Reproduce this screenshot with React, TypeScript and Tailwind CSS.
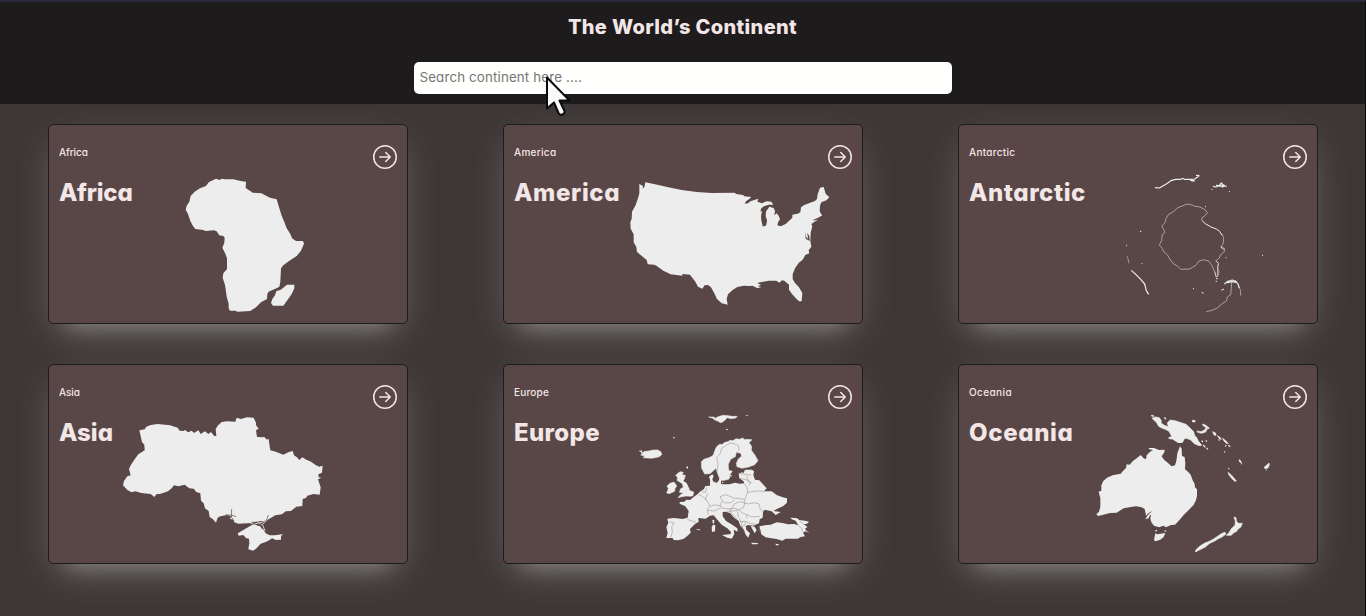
import type { ReactNode } from "react";
import { BsArrowRightCircle } from "react-icons/bs";

type Continent = { name: string; tracking: string; small: string; x: number; y: number; map: ReactNode };

const Africa = () => (
  <>
    <path d="M108 63L117 51L138 41L149 45L155 41L165 43L190 43L212 48L228 50L227 69L242 79L248 83L274 85L300 98L320 103L326 123L335 152L343 171L350 190L361 207L366 220L378 228L399 228L402 236L393 257L380 273L356 289L340 301L333 310L331 350L328 365L321 369L296 380L292 387L291 402L273 412L258 427L241 438L202 440L196 437L180 437L176 430L176 416L170 395L167 372L165 360L158 338L160 325L171 312L171 280L165 264L157 248L163 233L164 218L160 213L148 211L140 199L132 196L106 198L100 195L76 192L69 183L61 168L54 147L47 134L50 122L58 110L62 93L74 80L90 70Z" />
    <path d="M351 359L373 359L373 370L365 387L352 406L340 422L309 422L303 414L307 402L315 391L319 378L331 375Z" />
  </>
);

const America = () => (
  <path
    fillRule="evenodd"
    d="M73 57L84 63L83 71L88 66L91 52L120 58L160 67L200 75L245 81L290 84L358 83L364 87L384 90L388 94L409 96L402 103L393 109L389 116L399 115L406 109L430 101L427 110L441 115L455 109L469 110L475 119L461 119L447 124L439 130L436 139L441 139L438 153L439 166L443 184L450 184L454 179L456 166L452 154L453 139L458 133L461 128L463 125L476 129L480 138L478 151L485 145L491 152L495 163L490 170L487 181L497 184L512 177L532 158L532 149L548 146L556 142L558 127L568 120L584 114L600 108L606 102L608 88L615 68L626 66L632 86L643 97L634 106L619 112L615 122L614 138L618 146L622 151L608 159L592 166L602 166L609 164L594 173L589 178L592 184L587 204L586 228L589 245L581 256L583 265L571 270L563 284L551 294L540 310L533 328L533 342L540 354L552 367L562 384L560 409L552 409L542 399L531 387L522 374L522 359L508 347L501 346L493 353L484 347L462 347L440 351L426 354L438 359L428 364L439 366L428 370L412 362L404 363L387 362L367 366L352 376L339 388L335 402L338 419L320 415L306 402L299 387L288 367L279 360L269 361L262 371L249 365L241 350L225 329L202 327L202 332L167 328L145 317L124 302L118 299L98 298L95 285L84 276L66 261L64 246L56 232L56 208L47 191L46 172L50 162L51 140L62 120L69 100L73 85ZM570 197L573 215L579 222L577 203L583 214L584 228L572 221Z"
  />
);

const Antarctic = () => (
  <g fill="none" stroke="#ededed" strokeWidth="2.3" strokeLinejoin="bevel">
    <path d="M135 68L148 69L170 56L185 46L197 43L213 43L217 40L223 43L243 43L254 42L262 37L268 32L258 31" strokeWidth="3.4" />
    <path d="M241 44l6 3 7 0" strokeWidth="5" />
    <path d="M309 64l9 2 8-3 18 0 6 1M318 61l10 1 6-8 4 5 6 3-8 5" strokeWidth="3.8" />
    <path opacity=".7" d="M276 165L275 159L285 152L292 143L285 134L270 126L254 124L246 120L231 117L219 122L204 128L190 140L175 149L168 161L165 173L155 183L160 191L165 202L157 208L155 227L148 240L157 250L161 260L172 269L180 283L190 296L202 303L212 313L239 312L256 302L266 289L281 284L297 289L306 302L313 318L319 337M336 207L341 218L340 234L333 248L343 249L343 260L332 269L328 279L317 288L326 295L323 306L327 321L325 331L318 336L315 320" />
    <path d="M275 166L286 176L303 186L319 192L329 199L336 211" strokeWidth="3" />
    <path d="M318 287L325 295L323 309L322 335M333 242L336 250L342 253" opacity=".8" />
    <path d="M64 316L78 329L92 343L104 357L109 377L116 388" strokeWidth="3.6" />
    <path d="M51 274l3 7 3 14" opacity=".65" />
    <path d="M289 440L306 436L320 430L337 416L349 408L352 396L362 389L364 370L365 351" opacity=".7" />
    <path d="M343 357L354 349L367 345L378 349L385 359L388 369M352 353L366 350L378 352" strokeWidth="3.4" />
    <path d="M384 362L391 374L392 392" opacity=".65" />
    <path d="M334 376l8-4M275 382l6 3M90 199h4M48 241h3M304 73h3M357 80h3M456 271h3M249 371h3M94 296h3M285 125h3M317 349h4M347 278h3M318 341h5" strokeWidth="3" />
  </g>
);

const Asia = () => (
  <>
    <path d="M88 76L104 73L109 65L122 60L143 57L180 61L203 68L209 77L220 78L225 75L234 82L245 77L252 84L265 76L272 87L285 79L295 87L303 81L312 92L319 94L317 72L323 62L335 51L350 49L376 50L380 38L393 42L410 37L431 38L438 53L438 61L446 71L438 76L441 96L455 97L463 96L471 104L476 101L478 118L481 136L492 139L501 142L520 149L535 142L548 138L552 151L561 157L568 165L577 157L589 164L603 170L618 181L628 185L638 182L636 203L625 208L626 217L634 218L624 223L632 247L629 269L611 267L592 272L588 279L578 282L577 303L559 305L543 318L527 319L516 328L496 331L486 337L473 344L467 350L452 348L440 350L424 354L413 355L385 356L373 352L370 344L359 341L365 335L352 330L331 334L323 338L318 353L309 343L299 336L296 318L285 310L281 295L273 287L271 265L259 261L251 251L238 250L224 239L205 244L192 241L185 250L174 259L150 267L140 267L133 276L122 267L94 264L76 259L65 262L52 255L39 241L42 228L52 214L62 211L57 192L63 179L75 161L85 148L97 140L104 136L103 119L96 111Z" />
    <path d="M424 361L434 359L450 364L461 375L467 385L479 391L493 391L506 389L519 387L513 393L513 404L498 405L486 400L480 404L469 410L452 416L438 431L429 437L415 433L416 426L418 415L417 401L408 399L400 390L386 392L383 385L399 376L409 370Z" />
    <path d="M440 355L456 352L470 346L475 328M442 350L455 360L466 350M420 353L430 358L445 355M458 360L465 378" fill="none" stroke="#ededed" strokeWidth="2.5" />
    <path d="M346 329L366 331L378 335M365 312L364 336L372 348M424 352L440 352L452 360L456 372M458 353L470 345L475 330" fill="none" stroke="#594646" strokeWidth="2" />
  </>
);

const Europe = () => (
  <>
    <g stroke="#ededed" strokeWidth="1.6" strokeLinejoin="miter">
      <path d="M236 36L252 36L256 40L264 35L279 31L296 32L305 34L322 34L317 39L302 41L292 38L286 44L278 51L271 53L263 48L256 46L247 39ZM28 138L36 137L34 145L45 139L56 138L70 135L84 135L92 140L96 148L88 155L75 158L65 160L51 159L39 158L44 153L32 150L39 144ZM143 205L151 200L160 202L156 209L166 211L163 222L159 228L169 234L177 250L178 256L191 261L189 272L181 274L168 273L152 276L144 278L153 268L161 264L148 262L152 251L160 247L157 236L148 230L141 226L143 217L137 212ZM120 235L132 231L138 239L140 243L135 251L134 259L118 266L110 264L115 251L111 243Z" />
      <path d="M215 190L214 170L222 163L240 157L250 150L257 130L262 123L270 117L275 119L285 112L294 110L300 106L309 107L318 101L328 103L338 99L345 104L352 103L366 104L357 113L365 124L364 136L374 149L384 167L374 179L356 186L336 190L321 185L319 175L325 162L335 153L332 145L319 142L316 155L302 163L295 178L296 196L307 199L299 210L296 223L282 226L271 226L261 200L258 190L240 206L224 207Z" />
    </g>
    <path fillRule="evenodd" d="M247 208L251 213L247 223L251 232L261 233L266 227L269 219L274 224L272 237L282 238L298 238L315 233L330 236L343 235L340 228L328 220L326 205L340 205L345 194L366 194L372 199L370 211L375 224L388 226L399 238L410 250L402 259L425 259L440 270L458 277L471 280L471 293L460 303L442 311L430 318L452 321L437 330L425 319L411 316L404 314L399 321L398 338L389 343L387 355L370 362L355 360L347 363L349 374L360 385L355 398L346 388L342 374L331 362L326 348L311 337L300 324L286 320L278 321L278 334L288 348L303 357L322 370L323 380L311 374L313 387L306 400L301 391L303 381L292 370L275 359L262 344L251 331L240 332L227 341L205 339L206 350L195 357L180 372L182 383L171 394L160 402L144 406L131 405L128 399L109 399L113 383L109 366L115 354L112 341L132 339L158 342L173 338L176 318L166 304L149 296L149 291L163 290L169 284L180 285L190 277L202 268L212 259L222 252L226 243L240 242L240 224L237 215ZM362 362L368 374L374 385L380 376L374 365Z" />
    <path d="M388 364L405 361L422 359L440 352L458 354L474 358L493 357L505 361L497 347L485 343L481 338L500 339L508 345L525 347L537 350L531 356L522 358L532 366L525 371L530 378L539 384L526 379L519 383L525 394L512 396L503 401L484 401L467 401L457 407L440 402L424 400L407 397L394 388L391 374ZM276 390L297 388L310 387L305 401L292 398ZM249 359L256 361L255 379L246 381L245 366ZM247 344L253 345L252 357L248 354ZM364 413L385 414L381 418L366 418ZM435 416L448 418L441 422ZM328 208L336 201L340 206L330 217ZM262 233L273 230L271 242L261 241ZM168 186L173 184L175 189L171 191ZM196 374L211 372L208 376ZM129 97h5v3h-5zM288 72h5v3h-5zM344 33L355 30L353 33Z" />
    <g fill="none" stroke="#8f8282" strokeWidth="1.5">
      <path d="M261 200L264 178L260 158L270 147L275 130L290 120L302 114L312 116L325 121L327 139M328 205L348 209L364 210M327 220L349 224L362 234M350 212L356 229L364 233L355 241M353 262L379 258L403 259M344 237L351 248L353 262L346 279L342 293M205 269L214 272L224 280L232 289M215 260L227 262L230 247M232 289L226 282L233 265M270 275L286 269L300 274L313 280L329 281L343 283M270 275L279 290L286 294L303 293L312 285M232 289L240 303L232 313L234 330M240 304L252 300L271 302L275 290M270 301L277 310L305 312L313 296L331 290L345 294M273 308L253 318L233 316M300 312L314 310L327 314L340 308L345 294M342 293L355 297L375 293L387 297L391 313L399 320M327 314L335 323L348 328L352 340M350 328L364 336L390 334M300 312L303 324L322 342M289 318L305 319L322 316L326 338M329 339L331 350L347 349L362 356L375 357M336 348L335 362L341 378M347 349L344 361L334 365M172 343L186 348L198 351M120 350L132 354L125 366L127 381L122 398M387 364L390 382M505 361L515 371L519 383M509 347L524 360" />
    </g>
    <path d="M209 261h3M248 238L254 230M276 232h4M300 211l6 2M298 220l2-8" stroke="#ededed" strokeWidth="3" />
  </>
);

const Oceania = () => (
  <>
    <path d="M34 328L42 320L46 305L46 279L41 260L49 257L49 241L55 228L66 218L83 211L107 206L114 198L123 189L125 178L134 179L143 169L157 158L167 150L176 160L183 163L185 151L195 140L204 136L192 132L191 129L207 129L222 135L238 134L239 140L230 154L238 165L249 174L260 184L270 181L274 168L277 145L285 124L290 131L291 153L299 156L301 175L300 193L309 200L317 209L323 226L329 237L330 247L336 253L336 272L333 286L325 301L309 317L296 330L284 344L270 359L258 360L243 367L235 362L222 367L207 362L199 352L196 341L198 331L195 330L191 340L181 343L188 331L194 324L183 332L179 312L170 307L153 304L133 307L116 310L95 323L75 324L52 330L39 333ZM211 385L217 388L241 384L236 396L226 404L211 409L207 405Z" />
    <path stroke="#ededed" strokeWidth="2" d="M201 40L211 36L223 38L229 47L228 54L238 61L250 65L247 53L256 45L270 47L285 52L303 58L313 67L326 80L329 92L334 96L340 108L350 121L342 122L328 116L316 104L304 100L297 102L293 112L275 110L262 102L259 92L252 79L241 73L232 70L221 64L214 52ZM198 32L205 31L206 35ZM238 38L243 39L241 43ZM250 99L258 95L263 98L259 103ZM336 78L348 80L359 75L362 69L366 71L362 81L350 85L338 82ZM353 57L361 60L373 69L369 73L362 67L354 62ZM322 46L330 46L330 51L323 51ZM383 80L392 84L393 91L387 90ZM397 92L405 97L409 103L404 102ZM413 100L423 108L430 116L424 115L416 107ZM429 202L438 209L445 217L454 228L449 229L441 221L432 210ZM462 164L466 166L470 175L464 171ZM538 186L548 178L552 174L553 180L549 189L540 191ZM447 336L453 338L454 348L460 355L472 355L467 367L459 372L455 379L447 383L438 391L424 391L433 382L439 371L450 361L451 349ZM332 435L344 424L358 415L373 409L386 402L400 392L411 385L420 382L423 387L411 396L400 401L389 408L374 415L361 426L345 434L334 439Z" />
    <path d="M350 107l4 4M362 106l4 4M355 120l6 7M365 129l4 4M342 115l6 5M400 104l4 2M418 139l2 3M430 121l6 4M430 190l3 2M468 176l2 1M421 124l3-4M331 439h5M277 112h13M211 377h5M238 378h6M542 195h3" stroke="#ededed" strokeWidth="3.5" />
    <path d="M185 330L199 320" fill="none" stroke="#594646" strokeWidth="2.5" />
  </>
);

const continents: Continent[] = [
  { name: "Africa", tracking: "tracking-[-0.15px]", small: "tracking-[-0.1px]", x: 121, y: 40, map: <Africa /> },
  { name: "America", tracking: "tracking-[0.65px]", small: "tracking-[0.3px]", x: 111, y: 40, map: <America /> },
  { name: "Antarctic", tracking: "tracking-[0.55px]", small: "tracking-[0.3px]", x: 151, y: 40, map: <Antarctic /> },
  { name: "Asia", tracking: "tracking-[0px]", small: "tracking-[-0.1px]", x: 61, y: 40, map: <Asia /> },
  { name: "Europe", tracking: "tracking-[0.35px]", small: "tracking-[0.2px]", x: 126, y: 40, map: <Europe /> },
  { name: "Oceania", tracking: "tracking-[0.65px]", small: "tracking-[0.4px]", x: 126, y: 40, map: <Oceania /> },
];

function Card({ name, tracking, small, x, y, map }: Continent) {
  return (
    <article className="grid h-[200px] w-[360px] rounded-[5px] border border-[#1d1b1b] bg-[#594646] shadow-[0_13px_40px_-5px_rgba(255,255,255,0.2),0_18px_22px_-18px_rgba(255,255,255,0.36)]">
      <svg viewBox="0 0 358 198" className="col-start-1 row-start-1 h-[198px] w-[358px]" aria-hidden="true">
        <g transform={`translate(${x} ${y}) scale(0.33333)`} fill="#ededed">
          {map}
        </g>
      </svg>
      <div className="col-start-1 row-start-1 flex items-start justify-between px-[10px] pt-5 text-[#f3e6e6]">
        <div>
          <p className={`text-[10px] leading-[15px] font-medium ${small}`}>{name}</p>
          <h2 className={`mt-[15px] text-2xl leading-9 font-extrabold ${tracking}`}>{name}</h2>
        </div>
        <BsArrowRightCircle className="size-6" />
      </div>
    </article>
  );
}

export default function App() {
  return (
    <div className="h-[616px] overflow-hidden border-t-2 border-r border-t-[#2b2a3d] border-r-[#0d0c0c] bg-[#3d3636] font-[Inter,'Open_Sans',sans-serif] [font-feature-settings:'cv11']">
      <header className="flex h-[102px] flex-col items-center bg-[#1d1b1b] pt-[10px]">
        <h1 className="text-xl leading-[30px] font-extrabold tracking-[0.35px] whitespace-nowrap text-[#f3e6e6]">The World’s Continent</h1>
        <div className="mt-5 flex h-8 w-[538px] items-center rounded-[5px] bg-[#fffffd] pl-[6px]">
          <input
            className="w-full bg-transparent text-[13.33px] tracking-[0.15px] outline-none placeholder:text-[#757575]"
            placeholder="Search continent here ...."
            aria-label="Search continent"
          />
        </div>
      </header>
      <main className="grid grid-cols-[360px_360px_360px] gap-x-[95px] gap-y-10 px-12 pt-5">
        {continents.map((c) => (
          <Card key={c.name} {...c} />
        ))}
      </main>
      <svg className="absolute top-[74px] left-[544px] h-[43px] w-[29px]" viewBox="0 0 29 43" aria-hidden="true">
        <path d="M3 3.500V34.500L10 28.500L14.500 39Q16 41.500 18.500 40.500T20.500 37L15.500 26.500H25.500Z" fill="#fafafa" stroke="#0b0b0b" strokeWidth="2" strokeLinejoin="round" />
      </svg>
    </div>
  );
}
